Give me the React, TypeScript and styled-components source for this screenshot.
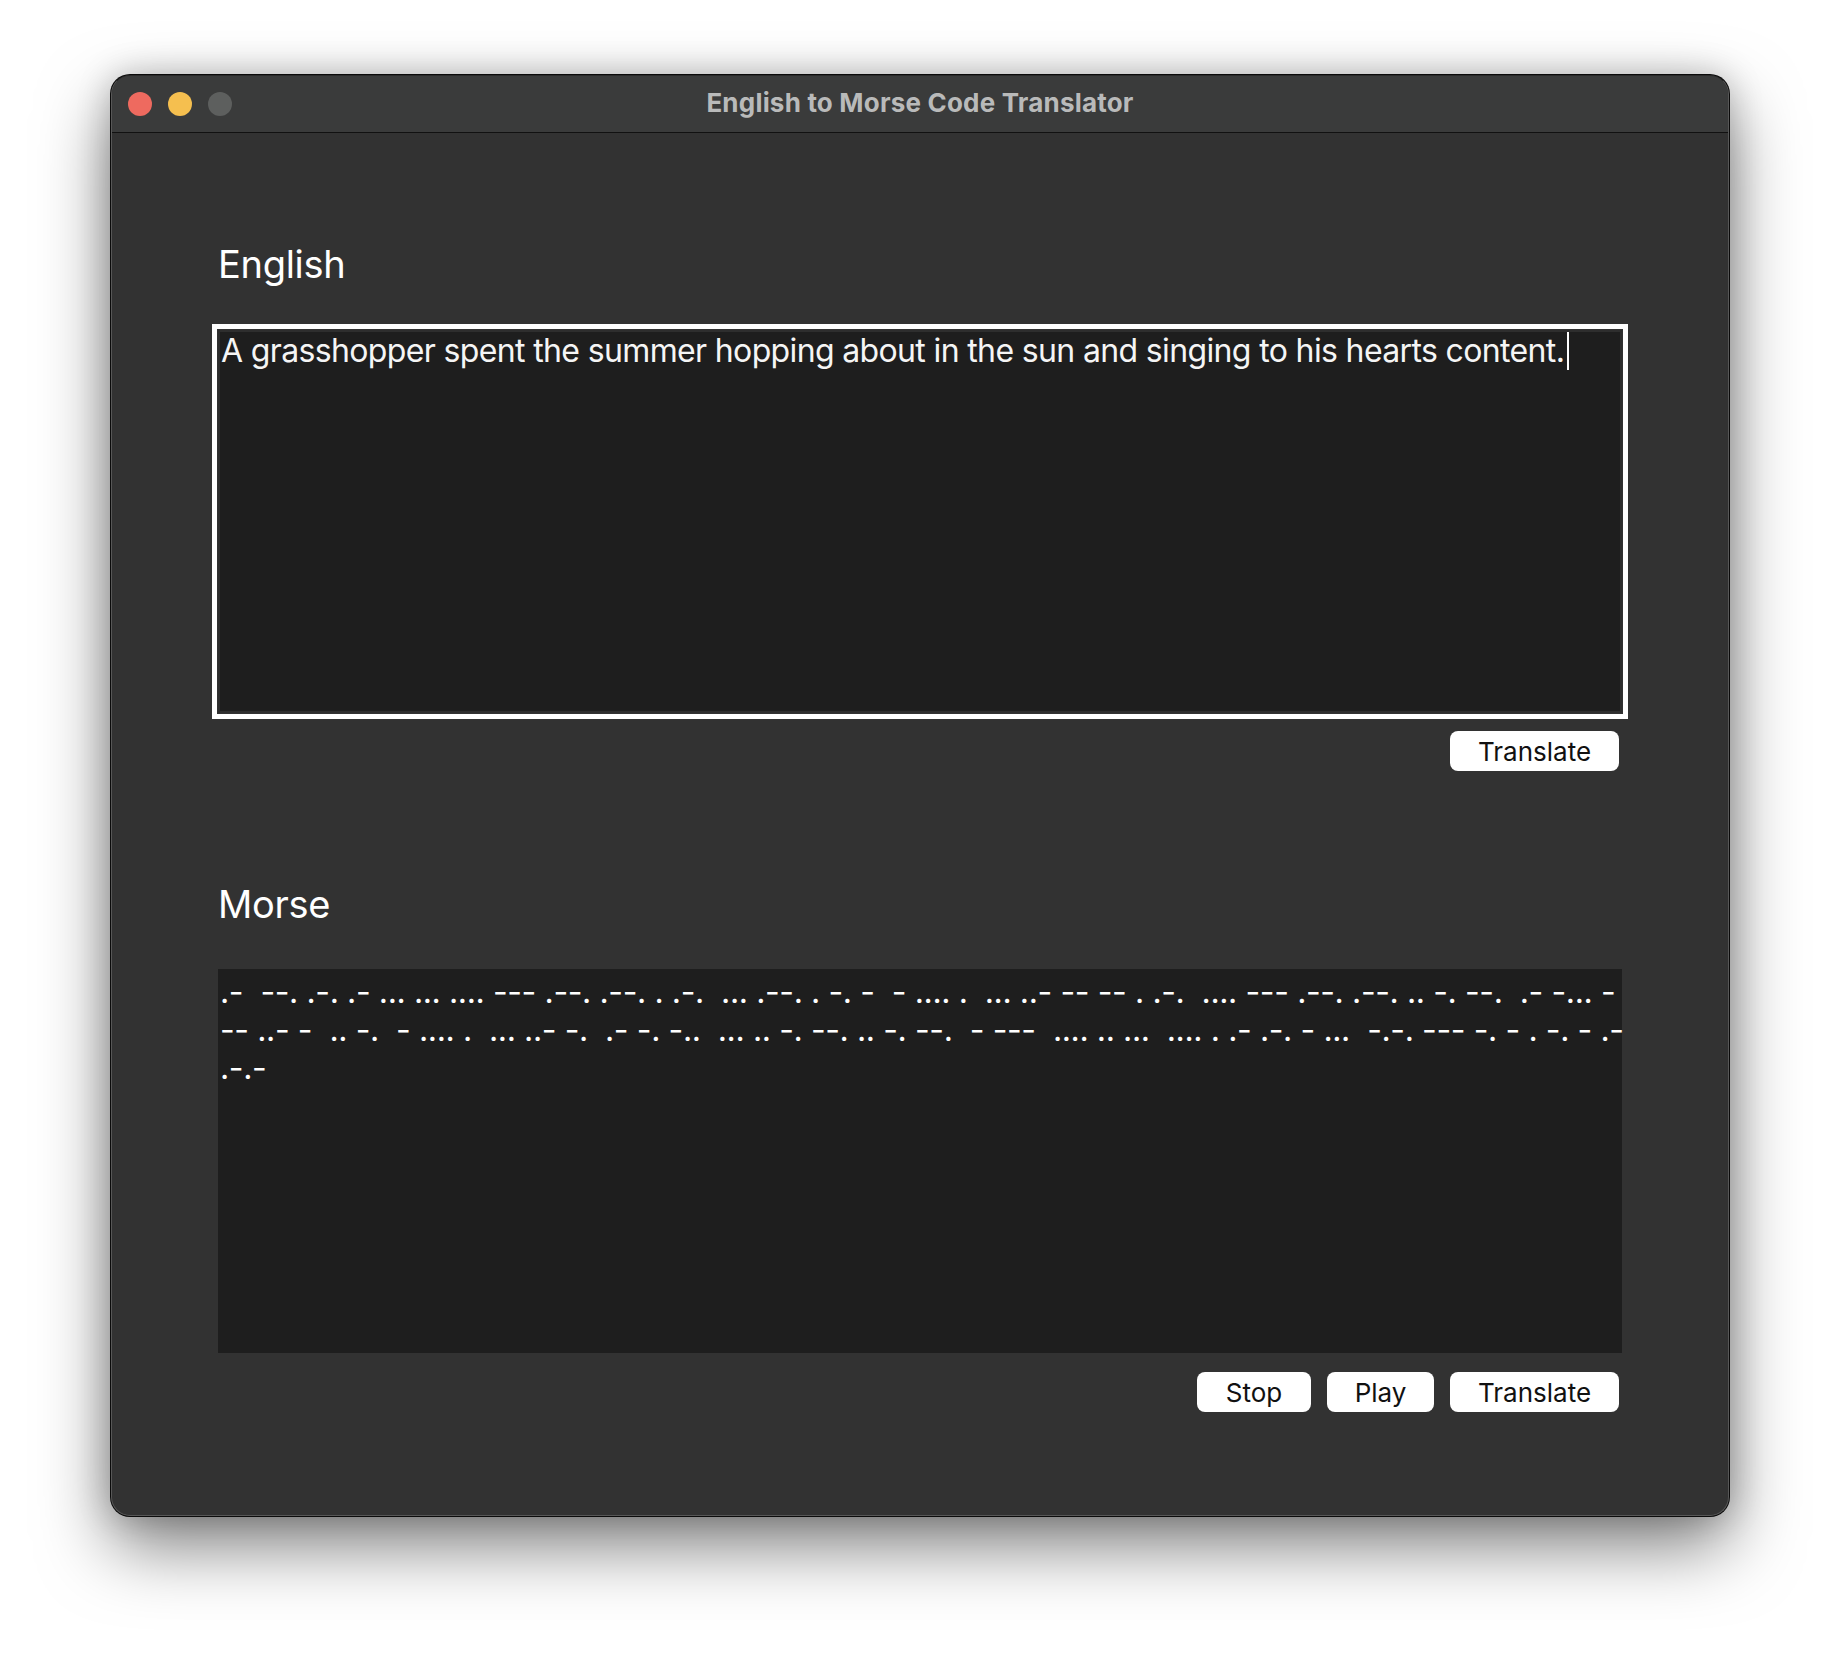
import React from "react";
import styled, { createGlobalStyle } from "styled-components";

const GlobalStyle = createGlobalStyle`
  html, body {
    margin: 0;
    padding: 0;
    background: #ffffff;
  }
  body {
    font-family: Inter, "Noto Sans", sans-serif;
    -webkit-font-smoothing: antialiased;
  }
`;

const Page = styled.div`
  width: 1840px;
  height: 1664px;
  box-sizing: border-box;
  padding: 75px 0 0 111px;
`;

const Window = styled.div`
  width: 1618px;
  height: 1441px;
  box-sizing: border-box;
  border-radius: 19px;
  border: 1px solid #575757;
  border-top-color: #2a2a2a;
  background: #323232;
  box-shadow: 0 0 0 1px #0b0b0b, 0 30px 70px rgba(0, 0, 0, 0.5),
    0 0 34px rgba(0, 0, 0, 0.22);
  overflow: hidden;
  display: flex;
  flex-direction: column;
`;

const TitleBar = styled.div`
  height: 57px;
  box-sizing: border-box;
  flex: none;
  background: #3a3b3b;
  border-bottom: 1px solid #111111;
  display: grid;
  grid-template-columns: 1fr auto 1fr;
  align-items: center;
`;

const Lights = styled.div`
  display: flex;
  gap: 16px;
  padding-left: 16px;
`;

const Light = styled.span<{ $color: string }>`
  width: 24px;
  height: 24px;
  border-radius: 50%;
  background: ${(p) => p.$color};
`;

const Title = styled.div`
  font-family: Inter, "Noto Sans", sans-serif;
  font-weight: 700;
  font-size: 26px;
  line-height: 30px;
  margin-top: -2px;
  color: #b9baba;
  letter-spacing: 0.2px;
`;

const Body = styled.div`
  flex: 1;
  display: flex;
  flex-direction: column;
  padding: 108px 106px 0 106px;
`;

const Label = styled.h2<{ $top?: number }>`
  margin: ${(p) => p.$top ?? 0}px 0 0 0;
  font-family: Inter, "Noto Sans", sans-serif;
  font-weight: 400;
  font-size: 38px;
  line-height: 46px;
  color: #ffffff;
  letter-spacing: -0.3px;
`;

const TextBox = styled.div`
  margin-top: 43px;
  height: 383px;
  box-sizing: border-box;
  background: #1e1e1e;
  border: 2px solid #2e2e2e;
  outline: 5px solid #ffffff;
  outline-offset: 1px;
  padding: 0 2px 0 1px;
  font-family: Inter, "Noto Sans", sans-serif;
  font-size: 32px;
  line-height: 38px;
  letter-spacing: -0.64px;
  color: #f5f5f5;
  white-space: pre-wrap;
`;

const Caret = styled.span`
  display: inline-block;
  width: 2px;
  height: 38px;
  margin-left: 3px;
  vertical-align: top;
  background: #ffffff;
`;

const MorseBox = styled.div`
  margin-top: 42px;
  height: 384px;
  box-sizing: border-box;
  background: #1e1e1e;
  padding: 4px 2px 0 2px;
  font-family: Inter, "Noto Sans", sans-serif;
  font-size: 32px;
  line-height: 38px;
  letter-spacing: -0.39px;
  color: #ffffff;
`;

const MorseLine = styled.div`
  white-space: pre;
`;

const ButtonRow = styled.div<{ $top: number }>`
  display: flex;
  justify-content: flex-end;
  gap: 16px;
  margin-top: ${(p) => p.$top}px;
  padding-right: 3px;
`;

const Button = styled.button<{ $w: number }>`
  width: ${(p) => p.$w}px;
  height: 40px;
  border: none;
  border-radius: 8px;
  background: #ffffff;
  color: #111111;
  font-family: Inter, "Noto Sans", sans-serif;
  font-size: 26px;
  font-weight: 400;
  padding: 0;
  cursor: default;
`;

const english =
  "A grasshopper spent the summer hopping about in the sun and singing to his hearts content.";

const morseLines = [
  ".-  --. .-. .- ... ... .... --- .--. .--. . .-.  ... .--. . -. -  - .... .  ... ..- -- -- . .-.  .... --- .--. .--. .. -. --.  .- -... -",
  "-- ..- -  .. -.  - .... .  ... ..- -.  .- -. -..  ... .. -. --. .. -. --.  - ---  .... .. ...  .... . .- .-. - ...  -.-. --- -. - . -. - .-",
  ".-.-",
];

export default function App() {
  return (
    <>
      <GlobalStyle />
      <Page>
        <Window>
          <TitleBar>
            <Lights>
              <Light $color="#ee6a5f" />
              <Light $color="#f5bf4f" />
              <Light $color="#5d5f5e" />
            </Lights>
            <Title>English to Morse Code Translator</Title>
            <span />
          </TitleBar>
          <Body>
            <Label>English</Label>
            <TextBox>
              {english}
              <Caret />
            </TextBox>
            <ButtonRow $top={18}>
              <Button $w={169}>Translate</Button>
            </ButtonRow>

            <Label $top={110}>Morse</Label>
            <MorseBox>
              {morseLines.map((l, i) => (
                <MorseLine key={i}>{l}</MorseLine>
              ))}
            </MorseBox>
            <ButtonRow $top={19}>
              <Button $w={114}>Stop</Button>
              <Button $w={107}>Play</Button>
              <Button $w={169}>Translate</Button>
            </ButtonRow>
          </Body>
        </Window>
      </Page>
    </>
  );
}
